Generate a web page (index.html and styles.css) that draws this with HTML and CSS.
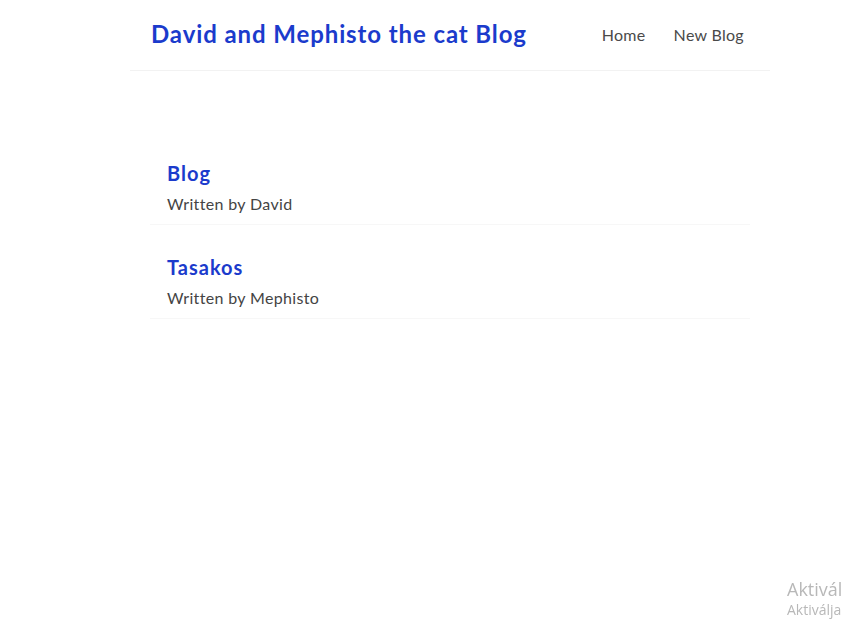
FILE: index.html
```html
<!DOCTYPE html>
<html lang="en">
<head>
<meta charset="utf-8">
<title>David and Mephisto the cat Blog</title>
<link rel="stylesheet" href="styles.css">
</head>
<body>
<div class="app">
  <nav class="navbar">
    <h1>David and Mephisto the cat Blog</h1>
    <div class="links">
      <a href="#">Home</a>
      <a href="#">New Blog</a>
    </div>
  </nav>
  <div class="content">
    <div class="home">
      <div class="blog-list">
        <div class="blog-preview">
          <h2>Blog</h2>
          <p>Written by David</p>
        </div>
        <div class="blog-preview">
          <h2>Tasakos</h2>
          <p>Written by Mephisto</p>
        </div>
      </div>
    </div>
  </div>
</div>
<div class="watermark">
  <div class="wm-title">Aktivál</div>
  <div class="wm-sub">Aktiválja</div>
</div>
</body>
</html>
```
FILE: styles.css
```css
* {
  margin: 0;
  box-sizing: border-box;
}
html, body {
  background: #fff;
}
body {
  margin: 0;
  font-family: Lato, "Open Sans", sans-serif;
  color: #333;
  overflow: hidden;
  height: 633px;
}
.app {
  padding-left: 52px;
}
.navbar {
  padding: 19px 20px 21px 21px;
  display: flex;
  align-items: center;
  max-width: 640px;
  margin: 0 auto;
  border-bottom: 1px solid #f2f2f2;
}
.navbar h1 {
  color: #1b3bcc;
  font-size: 24px;
  font-weight: 700;
  line-height: 30px;
  letter-spacing: 0.9px;
}
.navbar .links {
  margin-left: auto;
}
.navbar a {
  margin-left: 12px;
  text-decoration: none;
  padding: 6px;
  color: #4a4a4a;
  font-size: 16px;
  letter-spacing: 0.3px;
}
.content {
  max-width: 640px;
  margin: 40px auto;
  padding: 20px;
}
.blog-preview {
  padding: 10px 16px 10px 17px;
  margin: 20px 0;
  border-bottom: 1px solid #f7f7f7;
}
.blog-preview h2 {
  font-size: 20px;
  line-height: 25px;
  color: #1b3bcc;
  margin-bottom: 8px;
  font-weight: 700;
  letter-spacing: 1px;
}
.blog-preview p {
  font-size: 16px;
  line-height: 20px;
  color: #444;
  letter-spacing: 0.35px;
}
.watermark {
  position: fixed;
  left: 787px;
  top: 577px;
  color: #b8b8b8;
  font-family: "Open Sans", sans-serif;
  white-space: nowrap;
}
.wm-title {
  font-size: 18px;
  line-height: 24px;
}
.wm-sub {
  font-size: 14px;
  line-height: 18px;
}
```
